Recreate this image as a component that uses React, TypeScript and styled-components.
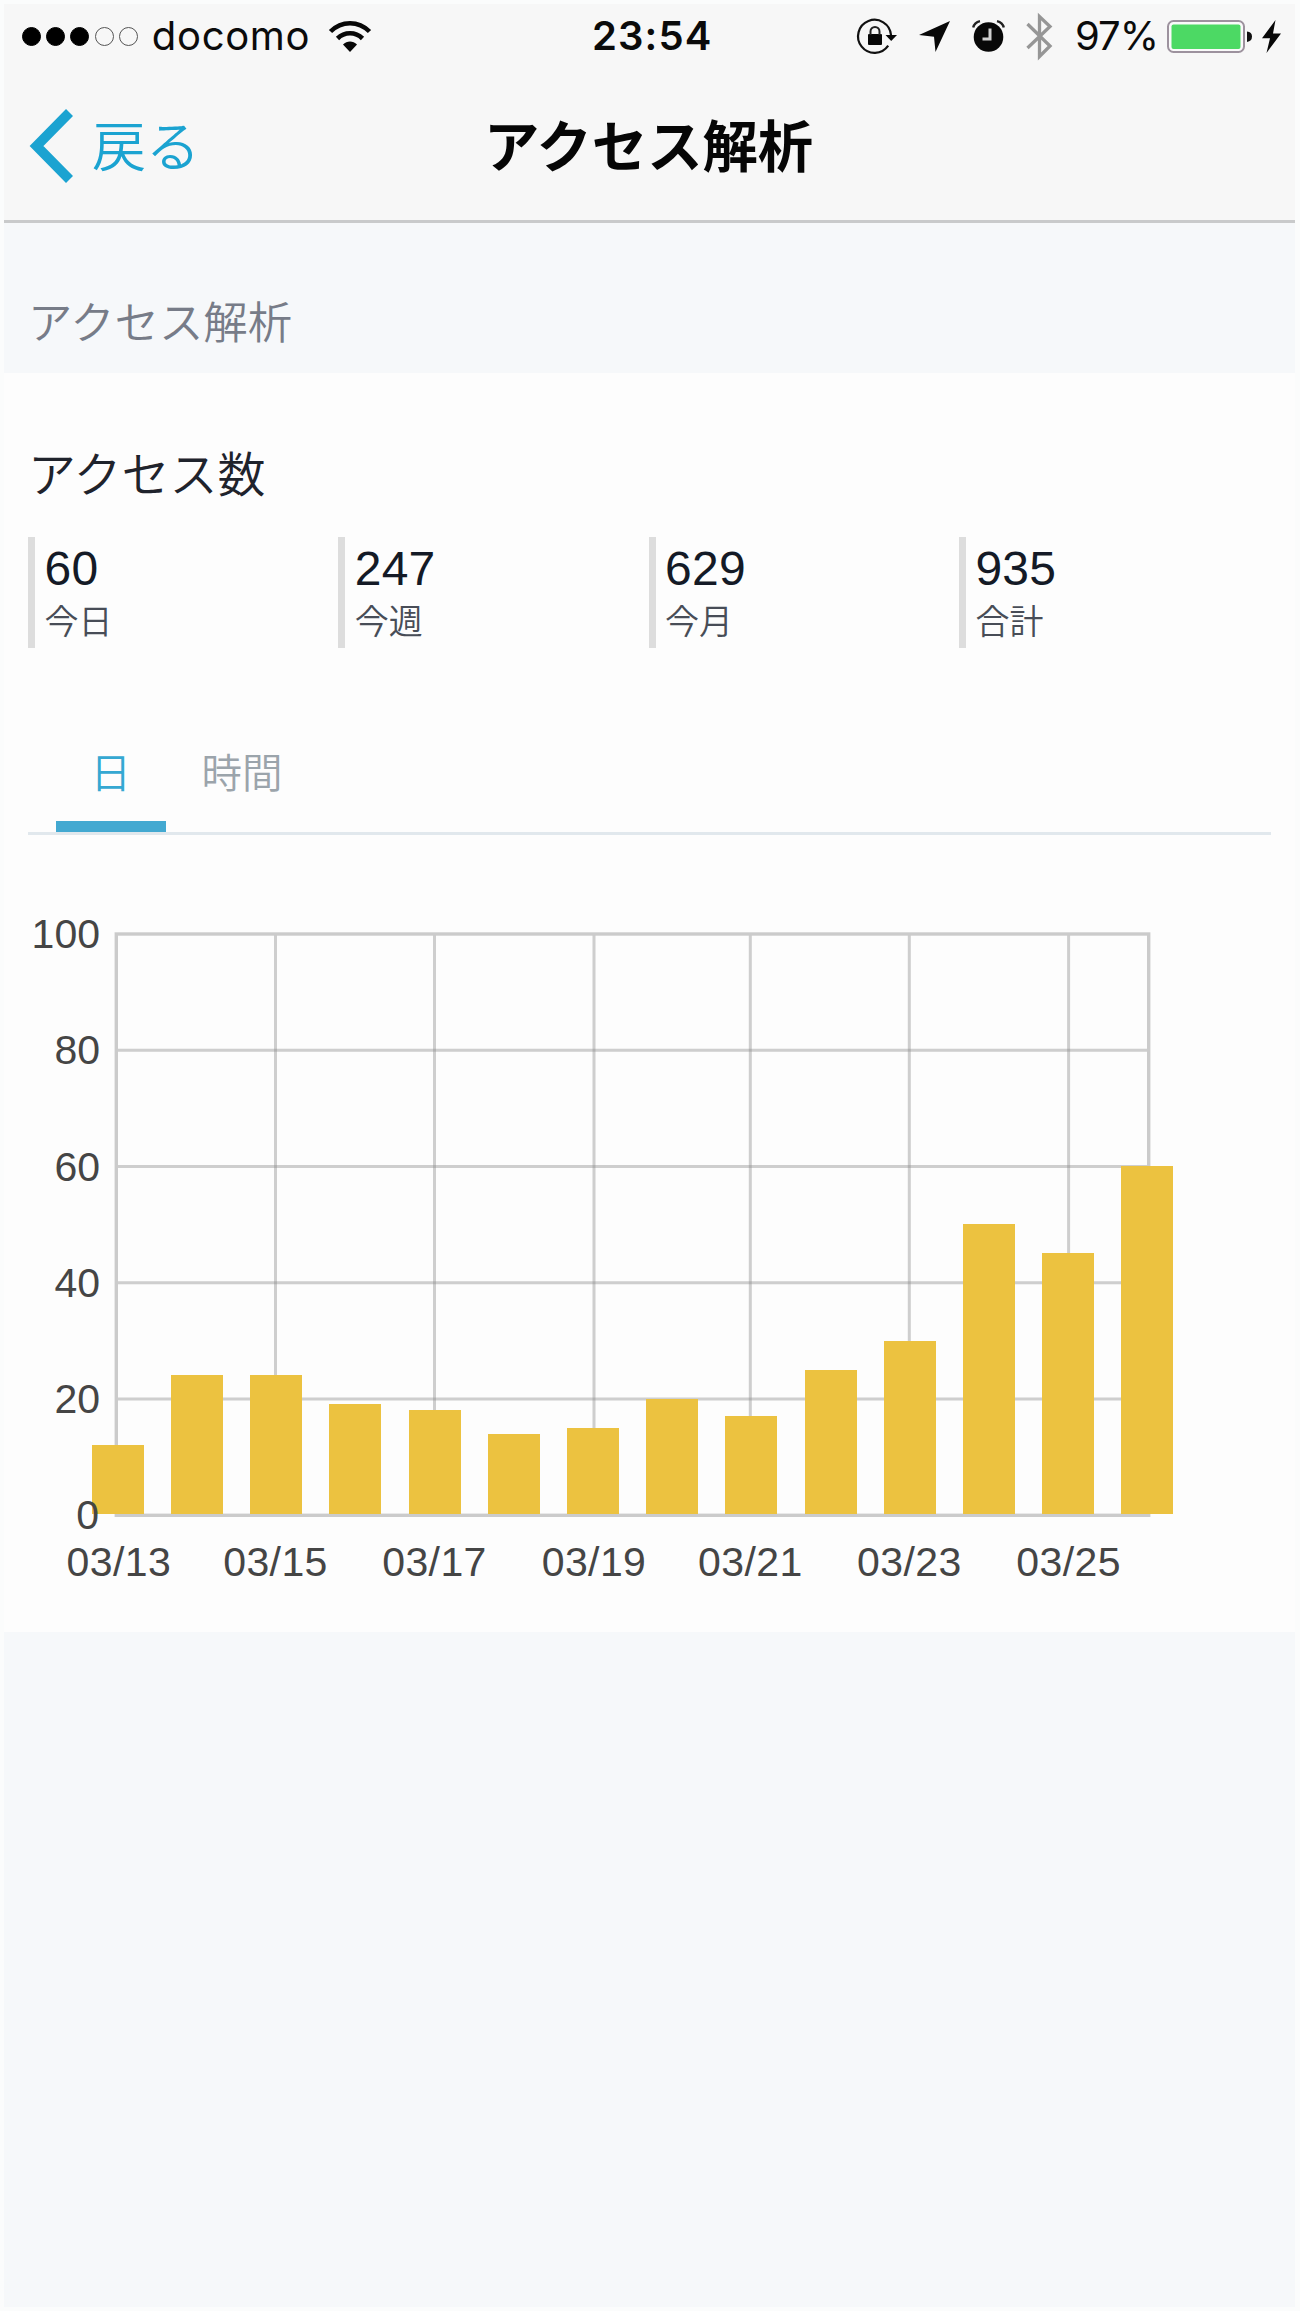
import React from "react";
import styled, { createGlobalStyle } from "styled-components";

const latin = '"Liberation Sans", "Noto Sans CJK JP", sans-serif';
const system = 'Inter, "Noto Sans CJK JP", sans-serif';

const GlobalStyle = createGlobalStyle`
  *, *::before, *::after { box-sizing: border-box; }
  body { margin: 0; background: #f6f8fa; }
`;

const Screen = styled.main`
  display: flex;
  flex-direction: column;
  width: 1300px;
  height: 2311px;
  overflow: hidden;
  background: #f6f8fa;
  border: solid #fbfcfc;
  border-width: 4px 5px 4px 4px;
  font-family: ${latin};
  font-weight: 350;
`;

const Header = styled.header`
  flex: none;
  height: 219px;
  background: #f7f7f7;
  border-bottom: 3px solid #c9cacb;
`;

const StatusBar = styled.div`
  display: grid;
  grid-template-columns: 570px 1fr auto;
  align-items: center;
  height: 64px;
  padding: 0 14px 0 18px;
  font-family: ${system};
  font-weight: 400;
  font-size: 40px;
  line-height: 64px;
  color: #0b0b0b;
`;

const StatusGroup = styled.div`
  display: flex;
  align-items: center;
`;

const SignalDots = styled.div`
  display: flex;
  gap: 5.2px;
`;

const Dot = styled.i<{ $on: boolean }>`
  width: 19px;
  height: 19px;
  border-radius: 50%;
  border: 1.5px solid ${(p) => (p.$on ? "#000" : "#555")};
  background: ${(p) => (p.$on ? "#000" : "transparent")};
`;

const Carrier = styled.span`
  width: 178px;
  padding-left: 14px;
  letter-spacing: 0.7px;
`;

const Clock = styled.time`
  font-weight: 600;
  letter-spacing: 1.1px;
`;

const Percent = styled.span`
  width: 92px;
  font-size: 40px;
  letter-spacing: -1px;
  white-space: nowrap;
`;

const Icon = styled.svg<{ $ml?: number }>`
  display: block;
  flex: none;
  overflow: visible;
  margin-left: ${(p) => p.$ml ?? 0}px;
`;

const NavBar = styled.nav`
  display: grid;
  grid-template-columns: 455px 1fr;
  align-items: center;
  height: 148px;
  padding: 8px 0 0 25px;
`;

const BackLink = styled.a`
  display: flex;
  align-items: center;
  gap: 19px;
  font-size: 54px;
  line-height: 74px;
  color: #1ba3d1;
`;

const BackText = styled.span`
  padding-top: 3px;
`;

const Title = styled.h1`
  margin: 0;
  padding-top: 3px;
  font-size: 55.3px;
  line-height: 74px;
  font-weight: 700;
  color: #060606;
`;

const SectionLabel = styled.h2`
  flex: none;
  height: 150px;
  margin: 0;
  padding: 69px 0 0 24px;
  font-size: 44.4px;
  line-height: 64px;
  font-weight: 350;
  color: #777c88;
`;

const Panel = styled.section`
  flex: none;
  height: 1259px;
  background: #fdfdfd;
`;

const PanelTitle = styled.h3`
  margin: 0;
  padding: 68px 0 0 24px;
  font-size: 48px;
  line-height: 70px;
  font-weight: 350;
  color: #1f232c;
`;

const Stats = styled.div`
  display: grid;
  grid-template-columns: repeat(4, 310.3px);
  margin: 26px 0 0 24px;
`;

const Stat = styled.div`
  height: 111px;
  padding: 9px 0 0 9.5px;
  border-left: 7px solid #dddddd;
`;

const StatValue = styled.div`
  font-size: 48px;
  line-height: 46px;
  letter-spacing: 0.2px;
  color: #141a26;
`;

const StatLabel = styled.div`
  margin-top: 5px;
  font-size: 34px;
  line-height: 50px;
  color: #484d57;
`;

const Tabs = styled.div`
  display: flex;
  height: 95px;
  margin: 92px 24px 0 24px;
  padding-left: 28px;
  border-bottom: 3px solid #e1e8ed;
`;

const Tab = styled.button<{ $active?: boolean }>`
  height: 92px;
  padding: 0 ${(p) => (p.$active ? 34.5 : 36)}px 14px;
  border: 0;
  border-bottom: 11px solid ${(p) => (p.$active ? "#43a9d1" : "transparent")};
  background: none;
  font-family: inherit;
  font-weight: 350;
  font-size: 40.5px;
  line-height: 56px;
  color: ${(p) => (p.$active ? "#35a8d2" : "#9ba4ab")};
`;

const ChartSvg = styled.svg`
  display: block;
  font-family: ${latin};
  font-size: 41px;
  fill: #454545;
`;

const values = [12, 24, 24, 19, 18, 14, 15, 20, 17, 25, 30, 50, 45, 60];
const days = ["03/13", "03/15", "03/17", "03/19", "03/21", "03/23", "03/25"];
const dayX = [112.3, 271.5, 430.5, 590, 746.3, 905.3, 1064.6];
const ticks = [0, 20, 40, 60, 80, 100];

const LEFT = 112.3;
const RIGHT = 1144.7;
const TOP = 99;
const BASE = 680.3;
const yOf = (v: number) => BASE - (v * (BASE - TOP)) / 100;
const barTop = (v: number) => Math.round(yOf(v) - 0.4);

function AccessChart() {
  return (
    <ChartSvg width="1291" height="790" viewBox="0 0 1291 790">
      <g stroke="#8c8c8c" strokeOpacity="0.42" strokeWidth="3">
        {ticks.slice(1, 5).map((t) => (
          <line key={t} x1={LEFT} x2={RIGHT} y1={yOf(t)} y2={yOf(t)} />
        ))}
        {dayX.slice(1).map((x) => (
          <line key={x} y1={TOP} y2={BASE} x1={x} x2={x} />
        ))}
      </g>
      <rect x={LEFT} y={TOP} width={RIGHT - LEFT} height={BASE - TOP} fill="none" stroke="#cbcbcb" strokeWidth="3.4" />
      {values.map((v, i) => (
        <rect
          key={i}
          x={Math.round(87.8 + i * 79.2)}
          y={barTop(v)}
          width="52"
          height={679 - barTop(v)}
          fill="#ecc240"
        />
      ))}
      {ticks.map((t) => (
        <text key={t} x={t === 0 ? 95 : 96} y={yOf(t) + 14} textAnchor="end">{t}</text>
      ))}
      {days.map((d, i) => (
        <text key={d} x={dayX[i] + (i === 0 ? 2.5 : 0)} y="741" textAnchor="middle" letterSpacing="0.4">{d}</text>
      ))}
    </ChartSvg>
  );
}

const stats = [
  ["60", "今日"],
  ["247", "今週"],
  ["629", "今月"],
  ["935", "合計"],
];

export default function App() {
  return (
    <>
      <GlobalStyle />
      <Screen>
        <Header>
          <StatusBar>
            <StatusGroup>
              <SignalDots>
                {[true, true, true, false, false].map((on, i) => <Dot key={i} $on={on} />)}
              </SignalDots>
              <Carrier>docomo</Carrier>
              <Icon $ml={13} width="42" height="31" viewBox="0 0 42 31">
                <g fill="none" stroke="#080808" strokeWidth="4.6">
                  <path d="M1.5 10.5C12.5-.6 29.5-.6 40.5 10.5" />
                  <path d="M8.5 17.5C15.5 10.5 26.5 10.5 33.5 17.5" />
                </g>
                <path d="M14 23.5C18 19.5 24 19.5 28 23.5L21 31Z" fill="#080808" />
              </Icon>
            </StatusGroup>
            <Clock>23:54</Clock>
            <StatusGroup>
              <Icon width="40" height="36" viewBox="0 0 40 36">
                <path d="M34 17A16.5 16.5 0 1 0 31.2 27.6" fill="none" stroke="#111" strokeWidth="2.2" />
                <path d="M28.5 17H40L34.2 23Z" fill="#080808" />
                <rect x="11" y="16" width="14" height="11" rx="1" fill="#080808" />
                <path d="M13.5 17V13.5a4.5 4.5 0 0 1 9 0V17" fill="none" stroke="#222" strokeWidth="2" />
              </Icon>
              <Icon $ml={22} width="31" height="31" viewBox="0 0 31 31">
                <path d="M31 0L16.5 31L15 15.8L0 14Z" fill="#080808" />
              </Icon>
              <Icon $ml={22} width="33" height="32" viewBox="0 0 33 32">
                <circle cx="16.5" cy="17" r="14.8" fill="#080808" />
                <path d="M1.2 7.5Q2.5 2.5 8 1.2M31.8 7.5Q30.5 2.5 25 1.2" fill="none" stroke="#222" strokeWidth="2.4" />
                <path d="M18 8.5V19H10.5" fill="none" stroke="#d0d0d0" strokeWidth="3" />
              </Icon>
              <Icon $ml={21} width="26" height="45" viewBox="0 0 26 45">
                <path d="M1.5 10L24 32L13.5 42.5V2.5L24 12.5L1.5 34" fill="none" stroke="#969696" strokeWidth="3.3" />
              </Icon>
              <Icon $ml={23} width="0" height="1" />
              <Percent>97%</Percent>
              <Icon width="85" height="33" viewBox="0 0 85 33">
                <rect x="1" y="1" width="76" height="31" rx="5.5" fill="#fafafa" stroke="#9d929e" strokeWidth="2" />
                <rect x="4.5" y="4.5" width="69" height="24.5" rx="2" fill="#4cd964" />
                <path d="M80 11.5Q85 12 85 16.5T80 22Z" fill="#111" />
              </Icon>
              <Icon $ml={10} width="19" height="33" viewBox="0 0 19 33">
                <path d="M13.5 0L0 18.2H8L4.5 33L19 13.5H11Z" fill="#080808" />
              </Icon>
            </StatusGroup>
          </StatusBar>
          <NavBar>
            <BackLink>
              <Icon width="44" height="74" viewBox="0 0 44 74">
                <path d="M40.5 3.5L7.5 37L40.5 70.5" fill="none" stroke="#1ba3d1" strokeWidth="9.8" />
              </Icon>
              <BackText>戻る</BackText>
            </BackLink>
            <Title>アクセス解析</Title>
          </NavBar>
        </Header>
        <SectionLabel>アクセス解析</SectionLabel>
        <Panel>
          <PanelTitle>アクセス数</PanelTitle>
          <Stats>
            {stats.map(([value, label]) => (
              <Stat key={label}>
                <StatValue>{value}</StatValue>
                <StatLabel>{label}</StatLabel>
              </Stat>
            ))}
          </Stats>
          <Tabs>
            <Tab $active>日</Tab>
            <Tab>時間</Tab>
          </Tabs>
          <AccessChart />
        </Panel>
      </Screen>
    </>
  );
}
